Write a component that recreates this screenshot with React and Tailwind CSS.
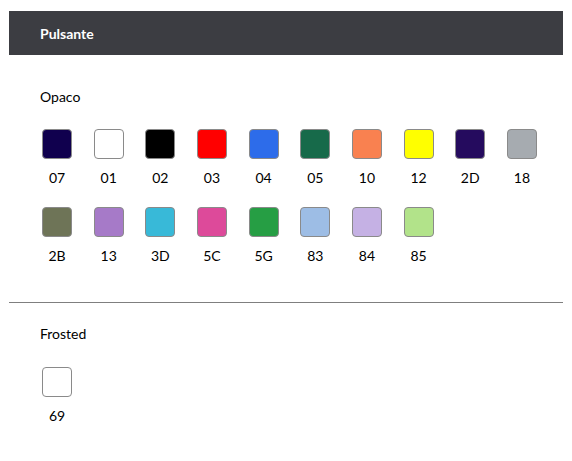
import React from "react";

const opaco = [
  { code: "07", color: "#10004e" },
  { code: "01", color: "#ffffff" },
  { code: "02", color: "#000000" },
  { code: "03", color: "#ff0000" },
  { code: "04", color: "#2d6cea" },
  { code: "05", color: "#176a4a" },
  { code: "10", color: "#f98150" },
  { code: "12", color: "#ffff00" },
  { code: "2D", color: "#250b5e" },
  { code: "18", color: "#a6abb0" },
  { code: "2B", color: "#6e7457" },
  { code: "13", color: "#a67ac8" },
  { code: "3D", color: "#38b9d8" },
  { code: "5C", color: "#dd4a9a" },
  { code: "5G", color: "#269e44" },
  { code: "83", color: "#9dbde5" },
  { code: "84", color: "#c5b1e4" },
  { code: "85", color: "#b2e38a" },
];

const frosted = [{ code: "69", color: "#ffffff" }];

const Swatch = ({ code, color }) => (
  <div className="w-[30px] mr-[21.67px] mb-[21px] flex flex-col items-center">
    <div
      className="w-[30px] h-[30px] rounded-[4px] border border-[#8a8a8a]"
      style={{ backgroundColor: color }}
    />
    <div className="mt-[10px] text-[14px] leading-[17px] text-black whitespace-nowrap">
      {code}
    </div>
  </div>
);

const App = () => {
  return (
    <div
      className="w-[572px] h-[461px] bg-white px-[9px] pt-[11px]"
      style={{ fontFamily: "Lato, 'Open Sans', sans-serif" }}
    >
      <div className="h-[44px] bg-[#3c3d42] flex items-center pl-[31px]">
        <span className="text-white text-[14px] font-bold">Pulsante</span>
      </div>

      {/* Opaco */}
      <div className="pl-[33px] pt-[33px]">
        <p className="text-[14px] leading-[17px] text-black -ml-[2px]">Opaco</p>
        <div className="flex flex-wrap mt-[24px]">
          {opaco.map((s) => (
            <Swatch key={s.code} {...s} />
          ))}
        </div>
      </div>

      <div className="mt-[17px] border-t border-[#7f7f7f]" />

      {/* Frosted */}
      <div className="pl-[33px] pt-[22px]">
        <p className="text-[14px] leading-[17px] text-black -ml-[2px]">Frosted</p>
        <div className="flex flex-wrap mt-[25px]">
          {frosted.map((s) => (
            <Swatch key={s.code} {...s} />
          ))}
        </div>
      </div>
    </div>
  );
};

export default App;
